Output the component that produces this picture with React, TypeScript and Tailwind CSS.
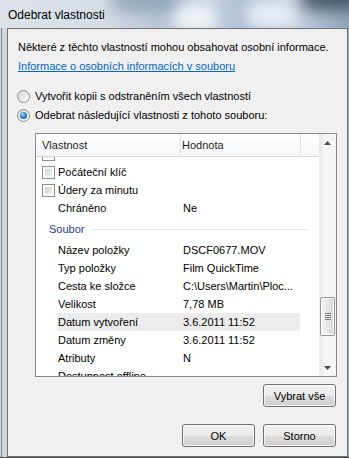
import React from "react";

function Checkbox() {
  return (
    <div className="w-[13px] h-[13px] shrink-0 border border-[#8e8f8f] bg-white p-[2px]">
      <div className="w-full h-full bg-gradient-to-br from-[#cdd1d6] to-[#f4f4f4]" />
    </div>
  );
}

function Radio({ checked }: { checked?: boolean }) {
  return (
    <div className="w-[13px] h-[13px] shrink-0 rounded-full border border-[#8e8f8f] bg-gradient-to-br from-[#d4d4d4] to-[#fcfcfc] flex items-center justify-center">
      {checked && (
        <div className="w-[7px] h-[7px] rounded-full bg-[radial-gradient(circle_at_40%_35%,#9fd3f7_0%,#2a82c9_50%,#0b3f74_100%)]" />
      )}
    </div>
  );
}

function Btn({ label }: { label: string }) {
  return (
    <div className="w-[73px] h-[23px] shrink-0 rounded-[3px] border border-[#707070] bg-[linear-gradient(to_bottom,#f2f2f2_0%,#ebebeb_50%,#dddddd_51%,#cfcfcf_100%)] shadow-[inset_0_0_0_1px_rgba(255,255,255,0.75)] flex items-center justify-center text-[11px] text-black">
      {label}
    </div>
  );
}

type Row = { label: string; value?: string; check?: boolean; sel?: boolean };

function PropRow({ label, value, check, sel }: Row) {
  return (
    <div className="flex h-[18px] items-center">
      <div className="w-[21px] shrink-0 pl-[6px] flex items-center">{check && <Checkbox />}</div>
      <div className={`w-[243px] h-[18px] flex items-center pl-[1px] ${sel ? "bg-[#ececec]" : ""}`}>
        <div className="w-[125px] shrink-0 whitespace-nowrap">{label}</div>
        <div className="whitespace-nowrap">{value}</div>
      </div>
    </div>
  );
}

export default function App() {
  const rowsTop: Row[] = [
    { label: "", check: true },
    { label: "Počáteční klíč", check: true },
    { label: "Údery za minutu", check: true },
    { label: "Chráněno", value: "Ne" },
  ];
  const rowsBottom: Row[] = [
    { label: "Název položky", value: "DSCF0677.MOV" },
    { label: "Typ položky", value: "Film QuickTime" },
    { label: "Cesta ke složce", value: "C:\\Users\\Martin\\Ploc..." },
    { label: "Velikost", value: "7,78 MB" },
    { label: "Datum vytvoření", value: "3.6.2011 11:52", sel: true },
    { label: "Datum změny", value: "3.6.2011 11:52" },
    { label: "Atributy", value: "N" },
    { label: "Dostupnost offline", value: "" },
  ];

  return (
    <div className="w-[349px] h-[458px] overflow-hidden flex flex-col bg-[#cfd8e1] font-['Liberation_Sans',Arial,sans-serif] text-[11px] leading-[16px] text-black">
      {/* Title bar */}
      <div className="relative h-[28px] shrink-0 overflow-hidden bg-[linear-gradient(to_right,#dde2e8_0%,#d6dde5_30%,#b9c9d8_45%,#c8d5e1_60%,#a9bfd3_70%,#c3d2df_85%,#8ea4b9_100%)]">
        <div className="absolute left-[110px] top-[-14px] w-[70px] h-[26px] rounded-full bg-[#7f99b2] blur-[8px] opacity-70" />
        <div className="absolute left-[175px] top-[6px] w-[40px] h-[24px] rounded-full bg-white blur-[7px] opacity-80" />
        <div className="absolute left-[245px] top-[2px] w-[50px] h-[26px] rounded-full bg-[#eef4fa] blur-[8px] opacity-90" />
        <div className="absolute left-[300px] top-[-16px] w-[60px] h-[26px] rounded-full bg-[#2e4154] blur-[8px] opacity-80" />
        <div className="relative pl-[8px] pt-[6px] text-[12px] leading-[18px] text-black">Odebrat vlastnosti</div>
      </div>

      <div className="flex flex-1 min-h-0">
        {/* left frame */}
        <div className="w-[7px] shrink-0 pl-[1px]">
          <div className="w-[1px] h-full bg-[#7a8693]" />
        </div>

        {/* client */}
        <div className="flex-1 flex flex-col border border-[#707070] bg-[#f0f0f0]">
          <div className="pl-[10px] pt-[10px] whitespace-nowrap">Některé z těchto vlastností mohou obsahovat osobní informace.</div>
          <div className="pl-[10px] mt-[3px] text-[#0066cc] underline whitespace-nowrap">Informace o osobních informacích v souboru</div>

          <div className="mt-[14px] pl-[9px] flex items-center gap-[5px] h-[16px]">
            <Radio />
            <span>Vytvořit kopii s odstraněním všech vlastností</span>
          </div>
          <div className="mt-[3px] pl-[9px] flex items-center gap-[5px] h-[16px]">
            <Radio checked />
            <span>Odebrat následující vlastnosti z tohoto souboru:</span>
          </div>

          {/* list view */}
          <div className="mt-[10px] ml-[27px] w-[302px] h-[244px] shrink-0 border border-[#828790] bg-white flex">
            <div className="flex-1 flex flex-col min-w-0">
              <div className="h-[23px] shrink-0 flex border-b border-[#d5d5d5] bg-[linear-gradient(to_bottom,#ffffff,#f5f6f7)] text-[#1e1e1e]">
                <div className="w-[145px] border-r border-[#e2e3e4] pl-[6px] flex items-center">Vlastnost</div>
                <div className="w-[120px] border-r border-[#e2e3e4] pl-[1px] flex items-center">Hodnota</div>
                <div className="flex-1" />
              </div>
              <div className="flex-1 overflow-hidden">
                <div className="-mt-[12px]">
                  {rowsTop.map((r, i) => (
                    <PropRow key={i} {...r} />
                  ))}
                  <div className="h-[24px] flex items-center pl-[13px] pr-[11px]">
                    <span className="text-[#1e3d96] mr-[7px]">Soubor</span>
                    <div className="flex-1 h-[1px] bg-[#e3e8f0]" />
                  </div>
                  {rowsBottom.map((r, i) => (
                    <PropRow key={i} {...r} />
                  ))}
                </div>
              </div>
            </div>

            {/* scrollbar */}
            <div className="w-[17px] shrink-0 flex flex-col bg-[linear-gradient(to_right,#e8e8e8,#f7f7f7_40%,#f4f4f4)]">
              <div className="h-[17px] flex items-center justify-center">
                <svg width="7" height="4" viewBox="0 0 7 4"><path d="M0 4 L3.5 0 L7 4 Z" fill="#4d4d4d" /></svg>
              </div>
              <div className="flex-1 flex flex-col">
                <div className="h-[146px]" />
                <div className="mx-[1px] h-[39px] rounded-[2px] border border-[#959595] bg-[linear-gradient(to_right,#f3f3f3,#e6e6e6_50%,#d9d9d9)] shadow-[inset_0_0_0_1px_rgba(255,255,255,0.8)] flex flex-col items-center justify-center gap-[1px]">
                  <div className="w-[6px] h-[1px] bg-[#7a7a7a]" />
                  <div className="w-[6px] h-[1px] bg-[#7a7a7a]" />
                  <div className="w-[6px] h-[1px] bg-[#7a7a7a]" />
                  <div className="w-[6px] h-[1px] bg-[#7a7a7a]" />
                </div>
              </div>
              <div className="h-[17px] flex items-center justify-center">
                <svg width="7" height="4" viewBox="0 0 7 4"><path d="M0 0 L7 0 L3.5 4 Z" fill="#4d4d4d" /></svg>
              </div>
            </div>
          </div>

          <div className="mt-[7px] flex justify-end pr-[11px]">
            <Btn label="Vybrat vše" />
          </div>
          <div className="mt-[17px] flex justify-end gap-[8px] pr-[11px]">
            <Btn label="OK" />
            <Btn label="Storno" />
          </div>
        </div>

        {/* right frame */}
        <div className="w-[1px] shrink-0 bg-[#9aa6b2]" />
      </div>
      <div className="h-[1px] shrink-0 bg-[#4a4a4a]" />
    </div>
  );
}
